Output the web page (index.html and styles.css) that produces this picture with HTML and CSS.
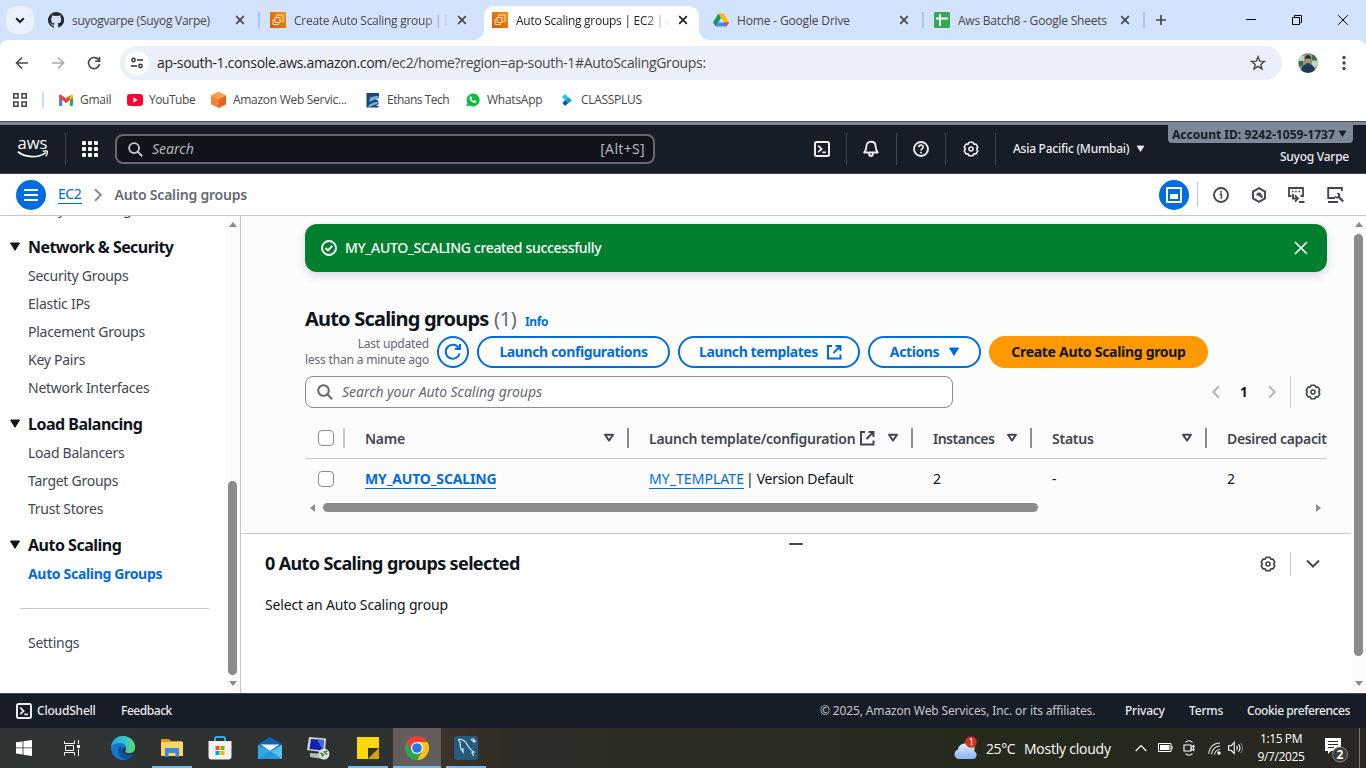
FILE: index.html
```html
<!DOCTYPE html>
<html lang="en">
<head>
<meta charset="utf-8">
<title>Auto Scaling groups | EC2 | ap-south-1</title>
<link rel="stylesheet" href="styles.css">
</head>
<body>
<svg width="0" height="0" class="defs">
  <defs>
    <linearGradient id="orange" x1="0" y1="1" x2="1" y2="0"><stop offset="0" stop-color="#d05a0c"/><stop offset="1" stop-color="#f8930f"/></linearGradient>
    <linearGradient id="edgeG" x1="0" y1="0" x2="1" y2="0"><stop offset="0" stop-color="#2aa7e4"/><stop offset=".6" stop-color="#35c6c8"/><stop offset="1" stop-color="#62dc5c"/></linearGradient>
    <linearGradient id="cloudG" x1="0" y1="0" x2="0" y2="1"><stop offset="0" stop-color="#e2efff"/><stop offset="1" stop-color="#86b2f5"/></linearGradient>
  </defs>
  <symbol id="close" viewBox="0 0 10 10"><path d="M1.2 1.2 8.8 8.8M8.8 1.2 1.2 8.8" fill="none" stroke="currentColor" stroke-width="1.7"/></symbol>
  <symbol id="ec2" viewBox="0 0 16 16"><rect width="16" height="16" fill="url(#orange)"/><path d="M6.500 5V3h6.500v6.500h-2.500M5 5.500h5v5H5zM4.500 7.500H3v5h5.500v-1.500" fill="none" stroke="#ffe0bd" stroke-width="1"/></symbol>
  <symbol id="gear" viewBox="0 0 16 16"><path d="M6.190 1.240h3.620l1.040 1.820 2.100-.010 1.810 3.140L13.700 8l1.060 1.810-1.810 3.140-2.100-.010-1.040 1.820H6.190l-1.040-1.820-2.100.010-1.810-3.140L2.300 8 1.240 6.190l1.810-3.140 2.100.010z" fill="none" stroke="currentColor" stroke-width="1.700" stroke-linejoin="round"/><circle cx="8" cy="8" r="2" fill="none" stroke="currentColor" stroke-width="1.600"/></symbol>
  <symbol id="shell" viewBox="0 0 16 16"><rect x="1" y="1" width="14" height="14" rx="1.500" fill="none" stroke="currentColor" stroke-width="2"/><path d="m4.200 4.600 3.400 3.300-3.400 3.300M8.300 11.300h3.600" fill="none" stroke="currentColor" stroke-width="1.800"/></symbol>
  <symbol id="search" viewBox="0 0 16 16"><circle cx="6.500" cy="6.500" r="5.300" fill="none" stroke="currentColor" stroke-width="2"/><path d="m10.500 10.500 4.700 4.700" fill="none" stroke="currentColor" stroke-width="2"/></symbol>
  <symbol id="external" viewBox="0 0 16 16"><path d="M6 2H2v12.500h12.500V10.500M9.500 2h5v5M14.200 2.200 7.500 9" fill="none" stroke="currentColor" stroke-width="2"/></symbol>
  <symbol id="sort" viewBox="0 0 12 10"><path d="M2 1.800h8L6 7.600z" fill="none" stroke="currentColor" stroke-width="1.900" stroke-linejoin="round"/></symbol>
  <symbol id="caret" viewBox="0 0 12 10"><path d="M1.500 1h9L6 8.300z" fill="currentColor" stroke="currentColor" stroke-linejoin="round"/></symbol>
  <symbol id="chev" viewBox="0 0 10 14"><path d="m2 1.200 5.800 5.800L2 12.800" fill="none" stroke="currentColor" stroke-width="2"/></symbol>
</svg>

<div class="tabstrip">
  <div class="tab-menu"><svg width="10" height="7" viewBox="0 0 10 7"><path d="m1.200 1.200 3.800 3.800 3.800-3.800" fill="none" stroke="#1f1f1f" stroke-width="2"/></svg></div>
  <div class="tab t1">
    <svg width="16" height="16" viewBox="0 0 16 16"><path fill="#24292f" d="M8 0a8 8 0 0 0-2.530 15.590c.4.070.550-.170.550-.380v-1.490C4 14.160 3.480 12.750 3.480 12.750c-.360-.920-.890-1.170-.890-1.170-.730-.500.060-.490.060-.490.800.060 1.230.830 1.230.830.710 1.220 1.870.870 2.330.660.070-.520.280-.870.510-1.070-1.780-.200-3.640-.890-3.640-3.950 0-.870.310-1.590.820-2.150-.080-.200-.360-1.020.080-2.120 0 0 .67-.210 2.200.820a7.600 7.600 0 0 1 4 0c1.530-1.040 2.200-.820 2.200-.820.440 1.100.160 1.920.080 2.120.510.560.820 1.270.820 2.150 0 3.070-1.870 3.750-3.650 3.950.290.250.540.730.540 1.480v2.200c0 .210.150.460.550.380A8 8 0 0 0 8 0"/></svg>
    <span class="tab-title">suyogvarpe (Suyog Varpe)</span><svg class="x" width="10" height="10"><use href="#close"/></svg>
  </div>
  <i class="tab-sep"></i>
  <div class="tab t2">
    <svg width="16" height="16"><use href="#ec2"/></svg>
    <span class="tab-title fade">Create Auto Scaling group | l</span><svg class="x" width="10" height="10"><use href="#close"/></svg>
  </div>
  <div class="tab t3">
    <svg width="16" height="16"><use href="#ec2"/></svg>
    <span class="tab-title fade">Auto Scaling groups | EC2 | a</span><svg class="x" width="10" height="10"><use href="#close"/></svg>
  </div>
  <div class="tab t4">
    <svg width="16" height="16" viewBox="0 0 16 16"><path d="M5.400 1.500h5.200L16 10.500h-5z" fill="#fbbc04"/><path d="M5.400 1.500 8 6 2.600 14.600 0 10.500z" fill="#0f9d58"/><path d="M5.200 10.500H16l-2.600 4.100H2.600z" fill="#4285f4"/><path d="M11 10.500h5l-2.600 4.100z" fill="#ea4335"/></svg>
    <span class="tab-title">Home - Google Drive</span><svg class="x" width="10" height="10"><use href="#close"/></svg>
  </div>
  <i class="tab-sep"></i>
  <div class="tab t5">
    <svg width="16" height="16" viewBox="0 0 16 16"><rect width="16" height="16" rx="1.500" fill="#34a853"/><path d="M2 6.400h12M6 2v12" stroke="#fff" stroke-width="2"/></svg>
    <span class="tab-title">Aws Batch8 - Google Sheets</span><svg class="x" width="10" height="10"><use href="#close"/></svg>
  </div>
  <i class="tab-sep"></i>
  <svg class="new-tab" width="12" height="12" viewBox="0 0 12 12"><path d="M6 1v10M1 6h10" stroke="#474747" stroke-width="1.700"/></svg>
  <div class="win-controls">
    <svg width="10" height="10" viewBox="0 0 10 10"><path d="M0 4.500h10" stroke="#000"/></svg>
    <svg width="10" height="10" viewBox="0 0 10 10"><path d="M.5 2.500h7v7h-7zM2.500 2.500v-2h7v7h-2" fill="none" stroke="#000"/></svg>
    <svg width="10" height="10" viewBox="0 0 10 10"><path d="m0 0 10 10M10 0 0 10" stroke="#000"/></svg>
  </div>
</div>

<div class="toolbar-wrap"><div class="toolbar">
  <svg width="14" height="14" viewBox="0 0 14 14"><path d="M13 7H2M7 1.500 1.500 7 7 12.500" fill="none" stroke="#474747" stroke-width="1.600"/></svg>
  <svg width="14" height="14" viewBox="0 0 14 14"><path d="M1 7h11M7 1.500 12.500 7 7 12.500" fill="none" stroke="#ababab" stroke-width="1.600"/></svg>
  <svg width="14" height="14" viewBox="0 0 14 14"><path d="M12 4.600A5.500 5.500 0 1 0 12.500 8M12.500 1v4.300H8.200" fill="none" stroke="#474747" stroke-width="1.600"/></svg>
  <div class="omnibox">
    <div class="site-info"><svg width="12" height="12" viewBox="0 0 12 12"><g fill="none" stroke="#303030" stroke-width="1.400"><circle cx="2.500" cy="3" r="1.700"/><path d="M6 3h6M0 9h6"/><circle cx="9.500" cy="9" r="1.700"/></g></svg></div>
    <span class="url"><b>ap-south-1.console.aws.amazon.com</b>/ec2/home?region=ap-south-1#AutoScalingGroups:</span>
    <svg width="16" height="16" viewBox="0 0 16 16"><path d="m8 1.800 1.700 4.300 4.700.3-3.600 3 1.200 4.500L8 11.400l-4 2.500 1.200-4.500-3.600-3 4.700-.3z" fill="none" stroke="#474747" stroke-width="1.400"/></svg>
  </div>
  <svg class="avatar" width="20" height="20" viewBox="0 0 20 20"><clipPath id="av"><circle cx="10" cy="10" r="10"/></clipPath><g clip-path="url(#av)"><rect width="20" height="20" fill="#7f9b80"/><path d="M0 3h6v5H0zM14 8h6v6h-6z" fill="#c3d0c2"/><path d="M1 8h4v5H1zM14 2h5v5h-5z" fill="#49684e"/><path d="M3 20c0-7 3-9 7-9s7 2 7 9z" fill="#203a55"/><ellipse cx="10" cy="7.500" rx="2.800" ry="3.800" fill="#b28d7b"/><path d="M7 6.500c0-6 6-6 6 0l-1-1H8z" fill="#26252b"/><path d="M8 10h4l-2 2z" fill="#433638"/></g></svg>
  <svg class="dots" width="4" height="16" viewBox="0 0 4 16"><g fill="#474747"><circle cx="2" cy="2.500" r="1.700"/><circle cx="2" cy="8" r="1.700"/><circle cx="2" cy="13.500" r="1.700"/></g></svg>
</div></div>

<div class="bookmarks">
  <svg class="apps" width="14" height="14" viewBox="0 0 14 14"><path d="M.8.8h4.200v4.200H.8zM9 .8h4.200v4.200H9zM.8 9h4.200v4.200H.8zM9 9h4.200v4.200H9z" fill="none" stroke="#474747" stroke-width="1.600"/></svg>
  <i class="bm-sep"></i>
  <div class="bm b1"><svg width="14" height="12" viewBox="0 0 14 12"><path d="M0 1.500 3.200 3.800V12H1a1 1 0 0 1-1-1z" fill="#4285f4"/><path d="M14 1.500 10.800 3.800V12H13a1 1 0 0 0 1-1z" fill="#34a853"/><path d="M10.800 2 12 .7c1-.7 2 0 2 1.200v1.500L10.800 6z" fill="#fbbc04"/><path d="M0 3.400V1.900C0 .7 1 0 2 .7l5 3.800L10.800 1.600V6L7 8.900z" fill="#ea4335"/></svg><span>Gmail</span></div>
  <div class="bm b2"><svg width="16" height="12" viewBox="0 0 16 12"><rect width="16" height="12" rx="3" fill="#f03"/><path d="m6.400 3.300 4.300 2.700-4.300 2.700z" fill="#fff"/></svg><span>YouTube</span></div>
  <div class="bm b3"><svg width="15" height="16" viewBox="0 0 15 16"><path d="M7.500 0 15 3.500v8.700L7.500 16 0 12.200V3.500z" fill="#f58536"/><path d="m7.500 7.500 7.500-4v8.700L7.500 16z" fill="#e8641c"/><path d="M7.500 0 15 3.500l-7.500 4-7.500-4z" fill="#f9a04d"/></svg><span>Amazon Web Servic...</span></div>
  <div class="bm b4"><svg width="14" height="15" viewBox="0 0 14 15"><path d="M.5 0H13v4.500L10 6.500l2.500 1.500v6.500H.5z" fill="#1d4673"/><path d="M4 4.500C6.500 4 8 3 13 3l-2 3c-3 0-5 2.500-8 3zM3 12c2-1 3-3 9.500-3l-2 2.500C7 11.500 6 14 2 14z" fill="#6db4e4"/><path d="M12.500 8.500v-2L14 5v4zM10 12.500l2.500-1.500v2z" fill="#fff"/></svg><span>Ethans Tech</span></div>
  <div class="bm b5"><svg width="14" height="14" viewBox="0 0 14 14"><path d="M7 .5A6.500 6.500 0 1 1 3.800 12.600L.4 13.500l1-3.300A6.500 6.500 0 0 1 7 .5z" fill="#0dbd43"/><path d="M4 3.700c1-.9 1.500.2 1.800 1.200.2.600-.9 1 0 1.900.9 1 1.600 1.500 2.300.8.900-.9 1.300.1 2.200.6.600.4-.2 1.900-1.500 1.800C5.800 9.800 2.400 5.700 4 3.700z" fill="#fff"/></svg><span>WhatsApp</span></div>
  <div class="bm b6"><svg width="10" height="12" viewBox="0 0 10 12"><path d="m3 0 3 3-3 3-3-3z" fill="#27c2f4"/><path d="m6 3 4 3.200-3.500 3L3.200 6z" fill="#109bd0"/><path d="m3 6 3.400 3L3 12 .500 9z" fill="#075a82"/></svg><span>CLASSPLUS</span></div>
</div>

<header class="aws">
  <div class="aws-row">
    <svg class="aws-logo" width="32" height="26" viewBox="0 0 32 26"><text x="0.500" y="13" class="aws-word" textLength="30" lengthAdjust="spacingAndGlyphs">aws</text><path d="M.8 15.800c8.500 6.300 20.200 6.300 28 .8" fill="none" stroke="#fff" stroke-width="1.700"/><path d="M25.800 15.300c3.200-.8 5-.4 4.500.7.2 1.200-.4 2.700-1.600 4.200" fill="none" stroke="#fff" stroke-width="1.400"/></svg>
    <i class="vline v1"></i>
    <svg class="grid9" width="16" height="16" viewBox="0 0 16 16"><g fill="#fff"><rect width="4" height="4" rx="1"/><rect x="6" width="4" height="4" rx="1"/><rect x="12" width="4" height="4" rx="1"/><rect y="6" width="4" height="4" rx="1"/><rect x="6" y="6" width="4" height="4" rx="1"/><rect x="12" y="6" width="4" height="4" rx="1"/><rect y="12" width="4" height="4" rx="1"/><rect x="6" y="12" width="4" height="4" rx="1"/><rect x="12" y="12" width="4" height="4" rx="1"/></g></svg>
    <div class="aws-search"><svg width="15" height="15"><use href="#search"/></svg><em>Search</em><span>[Alt+S]</span></div>
    <div class="aws-icons">
      <div><svg width="16" height="16"><use href="#shell"/></svg></div>
      <div><svg width="16" height="18" viewBox="0 0 16 18"><path d="M8 1.800c-3 0-4.600 2-4.600 4.500 0 3.300-1 4.700-2.100 6.200h13.400c-1.100-1.500-2.100-2.900-2.100-6.200C12.600 3.800 11 1.800 8 1.800zM6 13c0 4 4 4 4 0" fill="none" stroke="currentColor" stroke-width="1.900" stroke-linejoin="round"/></svg></div>
      <div><svg width="16" height="16" viewBox="0 0 16 16"><circle cx="8" cy="8" r="7" fill="none" stroke="currentColor" stroke-width="1.900"/><path d="M5.700 6.300C5.800 3.400 10.300 3.600 10.200 6.200 10.100 7.600 8 7.700 8 9.600M8 10.700v1.900" fill="none" stroke="currentColor" stroke-width="1.700"/></svg></div>
      <div><svg width="16" height="16"><use href="#gear"/></svg></div>
    </div>
    <span class="region">Asia Pacific (Mumbai)</span><svg class="region-caret" width="9" height="8"><use href="#caret"/></svg>
    <div class="account">
      <div class="account-id"><span>Account ID: 9242-1059-1737</span><svg width="9" height="8"><use href="#caret"/></svg></div>
      <div class="account-name">Suyog Varpe</div>
    </div>
  </div>
</header>

<nav class="crumbs">
  <div class="round menu"><svg width="14" height="12" viewBox="0 0 14 12"><path d="M0 1h14M0 6h14M0 11h14" stroke="#fff" stroke-width="2"/></svg></div>
  <a class="ec2-link">EC2</a>
  <svg class="crumb-chev" width="10" height="14"><use href="#chev"/></svg>
  <b class="crumb-cur">Auto Scaling groups</b>
  <div class="round panel"><svg width="16" height="16" viewBox="0 0 16 16"><path d="M1 1h14v14H1z" fill="none" stroke="#fff" stroke-width="2"/><path d="M4 7h8v5H4z" fill="#fff"/></svg></div>
  <i class="crumb-sep"></i>
  <div class="tools">
    <svg width="16" height="16" viewBox="0 0 16 16"><circle cx="8" cy="8" r="7" fill="none" stroke="currentColor" stroke-width="1.900"/><path d="M6.500 7.200H8.400v4.500M8 3.800v1.900" fill="none" stroke="currentColor" stroke-width="1.600"/></svg>
    <svg width="16" height="16" viewBox="0 0 16 16"><path d="m8 1.200 6 3.400v6.800l-6 3.400-6-3.400V4.600z" fill="none" stroke="currentColor" stroke-width="1.900"/><path d="M5.200 8.500a2.800 2.800 0 1 1 5.300 1L8 8z" fill="currentColor"/><path d="m7.500 7.500 4 3" stroke="currentColor" stroke-width="1.800"/></svg>
    <svg width="17" height="16" viewBox="0 0 17 16"><path d="M3.500 9H1V1h14v8h-2.500M5 7v4.500h5M7 8.300l3 3.200L7 14.700M11 15h5.500" fill="none" stroke="currentColor" stroke-width="1.800"/><path d="M4 4.500h1.500M7.200 4.500h1.500M10.500 4.500h1.500" stroke="currentColor" stroke-width="1.700"/></svg>
    <svg width="17" height="16" viewBox="0 0 17 16"><path d="M8 11H1.200V1h13.600v3M1 15h10" fill="none" stroke="currentColor" stroke-width="1.900"/><path d="M16.200 14.500l-4.500-4.500" stroke="currentColor" stroke-width="2.200"/><path d="M7.500 8.500c0 3 4 4 5.500 1.500S11.500 4.500 9.700 6.300l1.600 1.800L10 10z" fill="currentColor"/></svg>
  </div>
</nav>

<div class="body">
  <aside class="side">
    <div class="side-list">
      <div class="cut">Lifecycle Manager</div>
      <h3><svg width="12" height="10"><use href="#caret"/></svg><span class="h-a">Network &amp; Security</span></h3>
      <ul><li>Security Groups</li><li>Elastic IPs</li><li>Placement Groups</li><li>Key Pairs</li><li>Network Interfaces</li></ul>
      <h3><svg width="12" height="10"><use href="#caret"/></svg><span>Load Balancing</span></h3>
      <ul><li>Load Balancers</li><li>Target Groups</li><li>Trust Stores</li></ul>
      <h3><svg width="12" height="10"><use href="#caret"/></svg><span>Auto Scaling</span></h3>
      <ul><li class="on">Auto Scaling Groups</li></ul>
      <hr>
      <ul><li>Settings</li></ul>
    </div>
    <div class="vscroll side-scroll"><i class="up"></i><b></b><i class="down"></i></div>
  </aside>

  <main class="main">
    <section class="upper">
      <div class="flash"><svg width="16" height="16" viewBox="0 0 16 16"><circle cx="8" cy="8" r="7" fill="none" stroke="#fff" stroke-width="1.900"/><path d="m4.500 8 2.500 2.500 4.300-4.700" fill="none" stroke="#fff" stroke-width="1.900"/></svg><span>MY_AUTO_SCALING created successfully</span><svg class="dismiss" width="14" height="14" viewBox="0 0 14 14"><path d="m1 1 12 12M13 1 1 13" stroke="#fff" stroke-width="1.700"/></svg></div>
      <div class="title"><h1>Auto Scaling groups</h1><span class="count">(1)</span><a>Info</a></div>
      <div class="actions">
        <div class="updated"><div>Last updated</div><div class="ago">less than a minute ago</div></div>
        <div class="btn refresh"><svg width="18" height="18" viewBox="0 0 18 18"><path d="M15.500 10.500A7 7 0 1 1 14.600 5M16 1v5h-5" fill="none" stroke="currentColor" stroke-width="2"/></svg></div>
        <div class="btn lc"><span>Launch configurations</span></div>
        <div class="btn lt"><span>Launch templates</span><svg width="16" height="16"><use href="#external"/></svg></div>
        <div class="btn ac"><span>Actions</span><svg width="12" height="10"><use href="#caret"/></svg></div>
        <div class="btn create"><span>Create Auto Scaling group</span></div>
      </div>
      <div class="filter">
        <div class="find"><svg width="16" height="16"><use href="#search"/></svg><em>Search your Auto Scaling groups</em></div>
        <div class="pager"><svg class="flip" width="10" height="14"><use href="#chev"/></svg><b>1</b><svg width="10" height="14"><use href="#chev"/></svg><i></i><svg class="pref" width="16" height="16"><use href="#gear"/></svg></div>
      </div>
      <div class="table">
        <div class="row head">
          <div class="c0"><i class="box"></i></div>
          <div class="c1"><span>Name</span><svg width="12" height="10"><use href="#sort"/></svg></div>
          <div class="c2"><span>Launch template/configuration</span><svg class="ext" width="16" height="16"><use href="#external"/></svg><svg width="12" height="10"><use href="#sort"/></svg></div>
          <div class="c3"><span>Instances</span><svg width="12" height="10"><use href="#sort"/></svg></div>
          <div class="c4"><span>Status</span><svg width="12" height="10"><use href="#sort"/></svg></div>
          <div class="c5"><span>Desired capacity</span></div>
        </div>
        <div class="row item">
          <div class="c0"><i class="box"></i></div>
          <div class="c1"><a class="name">MY_AUTO_SCALING</a></div>
          <div class="c2"><a class="tpl">MY_TEMPLATE</a><span class="ver">| Version Default</span></div>
          <div class="c3"><span>2</span></div><div class="c4"><span>-</span></div><div class="c5"><span>2</span></div>
        </div>
      </div>
      <div class="hscroll"><i class="left"></i><b></b><i class="right"></i></div>
    </section>
    <section class="split">
      <i class="handle"></i>
      <div class="split-head"><h2>0 Auto Scaling groups selected</h2><svg width="16" height="16"><use href="#gear"/></svg><i></i><svg width="14" height="10" viewBox="0 0 14 10"><path d="m1 1.500 6 6 6-6" fill="none" stroke="currentColor" stroke-width="2"/></svg></div>
      <p>Select an Auto Scaling group</p>
    </section>
  </main>
  <div class="vscroll main-scroll"><i class="up"></i><b></b><i class="down"></i></div>
</div>

<footer class="foot">
  <svg width="16" height="16"><use href="#shell"/></svg><span class="f1">CloudShell</span><span class="f2">Feedback</span>
  <span class="f3">© 2025, Amazon Web Services, Inc. or its affiliates.</span><span class="f4">Privacy</span><span class="f5">Terms</span><span class="f6">Cookie preferences</span>
</footer>

<div class="taskbar">
  <div class="app w48"><svg width="16" height="16" viewBox="0 0 16 16"><path d="M0 2.300 6.600 1.400v6.100H0zM7.400 1.300 16 0v7.500H7.400zM0 8.300h6.600v6.200L0 13.600zM7.400 8.300H16V16l-8.600-1.300z" fill="#fff"/></svg></div>
  <div class="app w48"><svg width="16" height="16" viewBox="0 0 16 16"><g fill="none" stroke="#fff"><path d="M.5 4V1.500M.5 15v-2M.5 1.500V3.500h10V.500M.5 15.500v-3h10v3M1.500 5.500h8v5h-8zM14.500 0v4M14.500 9v7"/></g><path d="M13 5h3v3h-3z" fill="#fff"/></svg></div>
  <div class="app w54"><svg width="24" height="24" viewBox="0 0 24 24"><circle cx="12" cy="12" r="12" fill="#1378c9"/><path d="M0 11C1 3 7 0 12 0c7 0 12 5 12 11 0 4-3 6-6 6-3 0-4-1-3.500-2 2-3 0-8-5-8C5 7 1 8 0 11z" fill="url(#edgeG)"/><path d="M9 10c-5 5 0 13 6 13 3 0 6-2 7.500-4.500-4 1.800-9 1-10.500-2.500-.6-1.600 0-3 0-3z" fill="#0d4f9e"/><path d="M13.500 10.500c1.500 1.500 1.500 3.300.8 4.400-.7 1.200.8 2.600 4 2.300 2 0 4-.7 5-2-.3 1.400-.6 2.300-1 3-4 2-9.500 1-10.300-3-.3-2 .3-3.500 1.500-4.700z" fill="#303434"/></svg></div>
  <div class="app w44 run"><svg width="22" height="20" viewBox="0 0 22 20"><path d="M0 1h8l2 2h11v15H0z" fill="#dd9b1c"/><path d="M0 4h22v14H0z" fill="#fbd568"/><path d="M4 10h14v9h-3.500v-4h-7v4H4z" fill="#3b8cd8"/></svg></div>
  <div class="app w52"><svg width="24" height="24" viewBox="0 0 24 24"><path d="M7 6V2.500A1.500 1.500 0 0 1 8.500 1h7A1.500 1.500 0 0 1 17 2.500V6" fill="none" stroke="#29aee8" stroke-width="2"/><path d="M.5 5h23v15.500a3 3 0 0 1-3 3h-17a3 3 0 0 1-3-3z" fill="#f2f2f2"/><path d="M7.500 10h4v4h-4z" fill="#f25022"/><path d="M12.500 10h4v4h-4z" fill="#7fba00"/><path d="M7.500 15h4v4h-4z" fill="#00a4ef"/><path d="M12.500 15h4v4h-4z" fill="#ffb900"/></svg></div>
  <div class="app w48b"><svg width="24" height="22" viewBox="0 0 24 22"><path d="M0 7 12 0l12 7-12 8z" fill="#0f62b5"/><path d="M2.500 7.500h19L12 14z" fill="#f5f8fb"/><path d="M0 7.500 12 14v8H0z" fill="#2aa9e7"/><path d="M24 7.500v14.500H0z" fill="#53c2f5"/><path d="M12 14 24 22H0z" fill="#2397dd"/></svg></div>
  <div class="app w50"><svg width="24" height="24" viewBox="0 0 24 24"><path d="m2 1 17 1.500-1 14L0 14z" fill="#d4d5ca"/><path d="m4 3 13 1-1 10.500L2.500 13z" fill="#131fb2"/><path d="m10 3.500 7 .5-1 10.500z" fill="#4467e3"/><path d="m3 17 14 1-1 5-13-2z" fill="#bbb"/><circle cx="17" cy="18" r="5.500" fill="#dedfdc"/><path d="m13.500 17 3 1.500-2 2M20.500 15l-3 1 2.500 2.500" fill="none" stroke="#388947" stroke-width="1.500"/></svg></div>
  <div class="app w40 run"><svg width="22" height="22" viewBox="0 0 22 22"><path d="M0 0h22v11L11 22H0z" fill="#ffd80c"/><path d="M11 11h11L11 22z" fill="#343530"/><path d="M22 11v11H11z" fill="#d9a400"/></svg></div>
  <div class="app w48c run hot"><svg width="24" height="24" viewBox="0 0 24 24"><path d="M12 6h10.400A12 12 0 0 1 12 24l5.200-9z" fill="#fbc116"/><path d="M1.600 6A12 12 0 0 0 12 24l5.200-9L12 17l-5.200-2z" fill="#2da44e"/><path d="M1.600 6A12 12 0 0 1 22.400 6H12L6.800 15z" fill="#ea4335"/><circle cx="12" cy="12" r="6" fill="#fff"/><circle cx="12" cy="12" r="4.800" fill="#2c75e8"/></svg></div>
  <div class="app w40b run"><svg width="24" height="24" viewBox="0 0 24 24"><rect width="24" height="24" rx="3" fill="#245b7d"/><path d="M5 3c4 0 7 3 9 7 2 3 3 5 6 6l-2 1 2 3M5 3c-1 1 0 2 1 3 0 3 0 4 1 7l2 3v-4" fill="none" stroke="#dce8ee" stroke-width="1.200"/><path d="m17 3 3 3 2-1M19 2l2 4" stroke="#dce8ee" stroke-width="1.300"/></svg></div>

  <div class="weather"><svg width="26" height="26" viewBox="0 0 26 26"><circle cx="16" cy="12" r="6" fill="#f1872b"/><path d="M5 24a5 5 0 0 1 0-9.500C6 8 14 7 16 12c4-1 6 2 5.500 4.500A4 4 0 0 1 20 24z" fill="url(#cloudG)"/><circle cx="18" cy="7" r="5.800" fill="#d13323"/><text x="15.500" y="10.500" class="badge">1</text></svg></div>
  <span class="temp">25°C</span><span class="cloudy">Mostly cloudy</span>
  <svg class="up-caret" width="12" height="8" viewBox="0 0 12 8"><path d="m.7 7 5.300-5.500L11.300 7" fill="none" stroke="#fff" stroke-width="1.200"/></svg>
  <svg class="bat" width="15" height="10" viewBox="0 0 15 10"><path d="M.5.500h12.500v8H.5zM14 3v3.500" fill="none" stroke="#fff"/><path d="M2 2h9.500v5H2z" fill="#fff"/></svg>
  <svg class="cam" width="12" height="16" viewBox="0 0 12 16"><path d="M1 5h7v6H1zM8 7.500 10.800 5.500v5L8 8.500M2.500 2.300c2-1.800 5-1.800 7 0M2.500 13.700c2 1.800 5 1.800 7 0" fill="none" stroke="#fff" stroke-width="1.100"/></svg>
  <svg class="wifi" width="13" height="13" viewBox="0 0 13 13"><path d="M.7 12C1 5 6 1 12 1M3.500 12.500C4 8 7 4.300 12 4M6.500 12.500C7 9.800 9 7.600 12 7.500" fill="none" stroke="#ddd" stroke-width="1.100"/><circle cx="11" cy="11" r="1.700" fill="#fff"/></svg>
  <svg class="vol" width="16" height="14" viewBox="0 0 16 14"><path d="M.6 4.800h2.500L6.200 1.500v11L3.100 9.300H.6zM8.500 5c1 1 1 3 0 4M10.500 3.300c2 2 2 5.400 0 7.400" fill="none" stroke="#fff" stroke-width="1.100"/><path d="M12.700 1.800c2.500 3 2.500 7.400 0 10.400" fill="none" stroke="#777" stroke-width="1.100"/></svg>
  <div class="clock"><div class="time">1:15 PM</div><div class="date">9/7/2025</div></div>
  <svg class="notif" width="24" height="25" viewBox="0 0 24 25"><path d="M0 0h16v13H6l-3 3v-3H0z" fill="#fff"/><path d="M3 3.500h10M3 6.500h10M3 9.500h6" stroke="#2b2d22" stroke-width="1.200"/><circle cx="15" cy="16.500" r="7.500" fill="#3a3c35" stroke="#8b8d86"/><text x="11.600" y="20.800" class="badge2">2</text></svg>
  <i class="desk"></i>
</div>
</body>
</html>
```
FILE: styles.css
```css
* { box-sizing: border-box; }
html, body { margin: 0; width: 1366px; height: 768px; overflow: hidden; }
body { font-family: "Noto Sans", "Open Sans", sans-serif; font-size: 14px; color: #0f141a; background: #fff; display: flex; flex-direction: column; }
svg { flex: none; display: block; }
.defs { position: absolute; }
span, a, em, h1, h2, h3, b { white-space: nowrap; }
h1, h2, h3, p, ul { margin: 0; padding: 0; }
ul { list-style: none; }
i { flex: none; }

/* browser tabs */
.tabstrip { height: 40px; flex: none; background: #d3e2fd; display: flex; align-items: center; font: 12px "Open Sans", sans-serif; color: #474747; }
.tab-menu { width: 28px; height: 28px; margin-left: 6px; border-radius: 10px; background: #ebf2ff; display: flex; align-items: center; justify-content: center; }
.tab { display: flex; align-items: center; gap: 8px; height: 34px; padding-left: 8px; }
.tab-title { flex: 1; overflow: hidden; letter-spacing: -.27px; }
.fade { -webkit-mask-image: linear-gradient(90deg, #000 calc(100% - 26px), transparent); mask-image: linear-gradient(90deg, #000 calc(100% - 26px), transparent); }
.t1 { width: 218px; margin-left: 6px; padding-right: 13px; }
.t2 { width: 222px; margin-left: 2px; padding-right: 17px; }
.t3 { width: 215px; height: 34px; align-self: flex-end; padding-right: 11px; padding-bottom: 6px; background: #fff; border-radius: 10px 10px 0 0; color: #1f1f1f; position: relative; }
.t3::before, .t3::after { content: ""; position: absolute; bottom: 0; width: 10px; height: 10px; }
.t3::before { left: -10px; background: radial-gradient(circle at 0 0, transparent 9.500px, #fff 10px); }
.t3::after { right: -10px; background: radial-gradient(circle at 100% 0, transparent 9.500px, #fff 10px); }
.t4 { width: 217px; margin-left: 6px; padding-right: 13px; }
.t5 { width: 217px; margin-left: 2px; padding-right: 13px; }
.t4 .tab-title { letter-spacing: -.16px; }
.t5 .tab-title { letter-spacing: -.22px; }
.tab-sep { width: 2px; height: 16px; background: #a8c7fa; }
.new-tab { margin-left: 10px; }
.win-controls { margin-left: auto; margin-right: 18px; display: flex; gap: 36px; }

/* address bar */
.toolbar-wrap { flex: none; background: #d3e2fd; }
.toolbar { height: 46px; background: #fff; border-radius: 8px 8px 0 0; display: flex; align-items: center; padding-left: 15px; gap: 22px; }
.omnibox { width: 1162px; height: 34px; border-radius: 17px; margin-left: -3px; background: #ecf0fa; display: flex; align-items: center; padding: 0 16px 0 5px; }
.site-info { width: 24px; height: 24px; border-radius: 50%; background: #fff; display: flex; align-items: center; justify-content: center; }
.url { flex: 1; margin: -2px 0 0 8px; font: 14px "Open Sans", sans-serif; letter-spacing: -.335px; color: #474747; }
.url b { font-weight: 400; color: #1f1f1f; }
.avatar { margin-left: -6px; }
.dots { margin-left: 2px; }

/* bookmarks */
.bookmarks { height: 35px; flex: none; display: flex; align-items: center; padding-bottom: 7px; color: #474747; font: 12px "Open Sans", sans-serif; letter-spacing: -.25px; }
.bookmarks span { margin-top: -1px; }
.apps { margin-left: 13px; }
.bm-sep { width: 2px; height: 16px; margin-left: 15px; background: #c8dcfc; }
.bm { display: flex; align-items: center; }
.b1 { width: 68px; margin-left: 15px; gap: 7px; }
.b2 { width: 84px; gap: 6px; letter-spacing: -.45px; }
.b3 { width: 155px; gap: 7px; letter-spacing: -.29px; }
.b4 { width: 100px; gap: 7px; letter-spacing: -.5px; }
.b5 { width: 96px; gap: 7px; }
.b6 { gap: 9px; letter-spacing: -.3px; }

/* console header */
.aws { flex: none; height: 53px; border-top: 1px solid #414d5c; background: #161d26; border-bottom: 1px solid #424650; }
.aws-row { height: 51px; border-top: 3px solid #7d8998; display: flex; align-items: center; color: #ebebf0; }
.aws-logo { margin: 0 0 0 17px; }
.aws-word { font: 17px "Open Sans", sans-serif; fill: #fff; }
.vline { width: 1px; height: 32px; background: #424650; }
.v1 { margin-left: 16px; }
.grid9 { margin-left: 16px; }
.aws-search { width: 540px; height: 30px; margin-left: 17px; border: 2px solid #656871; border-radius: 8px; background: #0f141a; display: flex; align-items: center; padding: 0 8px 0 11px; color: #b4b4bb; }
.aws-search svg { color: #c6c6cd; }
.aws-search em { flex: 1; margin: -1px 0 0 9px; letter-spacing: 0; }
.aws-search span { margin-top: -1px; letter-spacing: .33px; }
.aws-icons { display: flex; margin-left: 142px; }
.aws-icons div { width: 50px; height: 32px; border-right: 1px solid #424650; display: flex; align-items: center; justify-content: center; }
.aws-icons div:nth-child(2) { padding-right: 2px; }
.aws-icons div:nth-child(3) { width: 49px; }
.region { margin: -1px 0 0 17px; width: 117px; font-size: 12px; font-weight: 500; letter-spacing: -.26px; }
.region-caret { margin-left: 6px; }
.account { margin-left: 23px; width: 185px; align-self: flex-start; }
.account-id { height: 18px; background: #7d8998; border-radius: 0 0 4px 4px; color: #161d26; font-weight: 700; font-size: 12px; display: flex; align-items: center; padding-left: 4px; }
.account-id span { width: 166px; letter-spacing: .03px; }
.account-name { margin: 5px 4px 0 0; text-align: right; font-size: 12px; font-weight: 500; line-height: 18px; letter-spacing: -.25px; }

/* breadcrumb row */
.crumbs { height: 42px; flex: none; border-bottom: 1px solid #c6c6cd; display: flex; align-items: center; padding-left: 16px; }
.round { width: 30px; height: 30px; border-radius: 50%; background: #006ce0; display: flex; align-items: center; justify-content: center; }
.crumbs a { color: #006ce0; border-bottom: 1px solid #006ce0; line-height: 18px; margin: 0 0 0 12px; width: 24px; letter-spacing: -.5px; }
.crumb-chev { color: #8c8c94; margin-left: 11px; }
.crumb-cur { color: #656871; font-weight: 600; margin-left: 11.500px; flex: 1; letter-spacing: -.2px; }
.crumb-sep { width: 1px; height: 25px; margin-left: 8px; background: #c6c6cd; }
.tools { display: flex; gap: 22px; margin: 0 22px 0 15px; color: #424650; }
.tools svg:nth-child(3) { margin: 0 0 0 -1px; }

.body { height: 477px; flex: none; display: flex; }

/* sidebar */
.side { width: 241px; border-right: 1px solid #c6c6cd; display: flex; overflow: hidden; }
.side-list { width: 225px; height: 477px; overflow: hidden; }
.cut { margin: -17px 0 0 28px; height: 20px; line-height: 20px; color: #424650; letter-spacing: -.1px; }
.side h3 { font-size: 16px; font-weight: 700; line-height: 20px; display: flex; align-items: center; gap: 7px; padding-left: 9px; margin: 12px 0 5px; }
.cut + h3 { margin-top: 18px; }
.side h3 span { letter-spacing: -.5px; }
.side h3 .h-a { letter-spacing: -.57px; }
.side li { height: 28px; line-height: 28px; padding-left: 28px; color: #424650; letter-spacing: -.26px; }
.side li.on { color: #006ce0; font-weight: 700; letter-spacing: -.33px; }
.side hr { margin: 20px 16px 20px 20px; border: 0; height: 1px; background: #c6c6cd; }
.vscroll { width: 15px; flex: none; background: #fcfcfc; display: flex; flex-direction: column; align-items: center; }
.vscroll b { width: 9px; border-radius: 5px; background: #8b8b8b; }
.up { border: 4.500px solid transparent; border-top: 0; border-bottom: 5px solid #8b8b8b; margin-top: 6px; }
.down { border: 4.500px solid transparent; border-bottom: 0; border-top: 5px solid #8b8b8b; margin-top: auto; margin-bottom: 7px; }
.side-scroll b { height: 194px; margin-top: 254px; }
.main-scroll b { height: 422px; margin-top: 7px; }

/* main area */
.main { width: 1110px; display: flex; flex-direction: column; }
.upper { height: 317px; background: #fcfcfd; padding: 8px 24px 0 64px; }
.flash { height: 48px; border-radius: 12px; background: #00802f; box-shadow: 0 4px 10px rgba(0,20,40,.14); color: #fff; display: flex; align-items: center; padding: 0 19px 0 16px; font-weight: 500; }
.flash span { margin: -1px 0 0 8px; flex: 1; letter-spacing: -.33px; }
.title { display: flex; align-items: baseline; margin-top: 33px; height: 30px; line-height: 28px; }
.title h1 { font-size: 20px; font-weight: 700; width: 189px; letter-spacing: -.8px; }
.count { font-size: 20px; color: #656871; width: 31px; letter-spacing: -.3px; }
.title a { font-size: 12px; font-weight: 700; color: #006ce0; letter-spacing: -.4px; }
.actions { display: flex; gap: 8px; margin-top: 1px; }
.updated { width: 124px; font-size: 12px; line-height: 16px; color: #656871; text-align: right; letter-spacing: -.19px; white-space: nowrap; }
.btn { height: 32px; border: 2px solid #006ce0; border-radius: 16px; color: #006ce0; font-weight: 700; background: #fff; display: flex; align-items: center; justify-content: center; letter-spacing: -.4px; }
.btn span { margin-top: -1px; }
.refresh { width: 32px; }
.lc { width: 193px; }
.lt { width: 182px; gap: 8px; padding-left: 3px; }
.ac { width: 113px; gap: 9px; padding-left: 1px; }
.create { width: 219px; background: #ff9900; border-color: #ff9900; color: #0f141a; letter-spacing: -.3px; }
.filter { margin-top: 8px; display: flex; height: 32px; align-items: center; }
.find { width: 648px; height: 32px; border: 1px solid #8c8c94; border-radius: 8px; background: #fff; display: flex; align-items: center; padding-left: 11px; color: #656871; }
.find em { margin: -1px 0 0 9px; letter-spacing: -.04px; }
.pager { flex: 1; height: 32px; display: flex; align-items: center; padding-left: 258px; color: #b4b4bb; }
.pager b { width: 8px; margin: 0 19px; color: #0f141a; font-size: 13.500px; }
.pager i { width: 1px; height: 32px; margin: 0 14px 0 13px; background: #c6c6cd; }
.pref { color: #424650; }
.flip { transform: scaleX(-1); }
.table { margin-top: 10px; overflow: hidden; }
.row { display: flex; height: 41px; width: 1080px; }
.item { height: 40px; }
.row > div { display: flex; align-items: center; flex: none; }
.item span { margin-top: -2px; }
.head { border-bottom: 1px solid #c6c6cd; font-weight: 600; color: #424650; letter-spacing: -.25px; }
.row .c0 { width: 40px; padding-left: 13px; }
.row .c1 { width: 284px; padding-left: 20px; }
.row .c2 { width: 284px; padding-left: 20px; }
.row .c3 { width: 119px; padding-left: 20px; }
.row .c4 { width: 175px; padding-left: 20px; }
.row .c5 { width: 200px; padding-left: 20px; }
.head .c3 { letter-spacing: -.5px; }
.head .c5 { letter-spacing: -.33px; }
.head > div { background: linear-gradient(#8c8c94, #8c8c94) right 0 center / 2px 20px no-repeat; }
.head .c0 { background-image: linear-gradient(#c6c6cd, #c6c6cd); }
.head .c5 { background: none; }
.head .c1 > svg, .head .c2 > svg, .head .c3 > svg, .head .c4 > svg { margin-left: auto; margin-right: 14px; }
.head .c2 > .ext { margin: 0 0 0 4px; }
.box { width: 16px; height: 16px; border: 1px solid #8c8c94; border-radius: 4px; background: #fff; }
.name { color: #006ce0; font-weight: 700; border-bottom: 1px solid #006ce0; line-height: 18px; letter-spacing: -.16px; }
.tpl { color: #006ce0; border-bottom: 1px solid #006ce0; line-height: 18px; letter-spacing: .05px; }
.ver { margin-left: 2px; letter-spacing: -.3px; }
.hscroll { display: flex; align-items: center; height: 15px; margin-top: 1px; }
.hscroll b { width: 715px; height: 9px; border-radius: 5px; background: #8b8b8b; margin-left: 8px; }
.left { border: 4.500px solid transparent; border-left: 0; border-right: 5px solid #8b8b8b; margin-left: 5px; }
.right { border: 4.500px solid transparent; border-right: 0; border-left: 5px solid #8b8b8b; margin-left: auto; margin-right: 6px; }

.split { height: 160px; border-top: 1px solid #c6c6cd; background: #fff; padding: 9px 31px 0 24px; }
.handle { display: block; width: 14px; height: 2px; margin: 0 0 0 524px; background: #424650; border-radius: 1px; }
.split-head { display: flex; align-items: center; height: 24px; margin-top: 7px; color: #424650; }
.split-head h2 { flex: 1; font-size: 18px; font-weight: 700; color: #0f141a; letter-spacing: -.63px; margin-top: -2px; }
.split-head i { width: 1px; height: 24px; background: #c6c6cd; margin: 0 15px 0 14px; }
.split p { margin-top: 19px; line-height: 20px; letter-spacing: -.17px; }

/* console footer */
.foot { height: 35px; flex: none; background: #161d26; border-top: 1px solid #424650; display: flex; align-items: center; padding-left: 16px; color: #ebebf0; font-size: 12px; font-weight: 500; letter-spacing: -.2px; }
.foot span { margin-top: -1px; }
.foot .f1 { width: 84px; margin-left: 5px; }
.f2 { width: 699px; letter-spacing: -.45px; }
.f3 { width: 305px; color: #c6c6cd; font-weight: 400; letter-spacing: -.14px; }
.f4 { width: 64px; }
.f5 { width: 58px; }
.f6 { letter-spacing: -.42px; }

/* taskbar */
.taskbar { height: 40px; flex: none; display: flex; align-items: center; background: linear-gradient(90deg, #2f3434 0, #2d3230 380px, #3b312c 450px, #2d2c26 520px, #2b2c24 780px, #25291b 1000px, #26281e 1180px, #2b2723 1366px); color: #fff; font: 12px "Open Sans", sans-serif; }
.app { height: 40px; display: flex; align-items: center; justify-content: center; }
.run { border-bottom: 2px solid #76b9ed; padding-top: 2px; }
.w48 { width: 48px; }
.w54 { width: 54px; }
.w44 { width: 40px; margin-left: 2px; }
.w52 { width: 52px; margin-left: 2px; }
.w48b { width: 48px; }
.w50 { width: 50px; }
.w40 { width: 40px; margin-left: 4px; }
.w48c { width: 48px; margin-left: 5px; }
.w40b { width: 40px; margin-left: 5px; }
.hot { background: #635e5b; }
.weather { margin-left: 467px; width: 33px; }
.badge { font: 10px "Open Sans", sans-serif; fill: #fff; }
.badge2 { font: 700 12px "Open Sans", sans-serif; fill: #fff; }
.temp { width: 38px; font-size: 14px; letter-spacing: -.4px; }
.cloudy { width: 87px; font-size: 14px; letter-spacing: -.23px; }
.up-caret { margin-left: 24px; }
.bat { margin-left: 11px; }
.cam { margin-left: 10px; }
.wifi { margin-left: 13px; }
.vol { margin-left: 7px; }
.clock { width: 50px; margin-left: 12px; text-align: center; line-height: 18px; letter-spacing: -.4px; }
.notif { margin-left: 19px; margin-top: 4px; }
.desk { width: 1px; height: 40px; background: #777; margin-left: 10px; }
```
